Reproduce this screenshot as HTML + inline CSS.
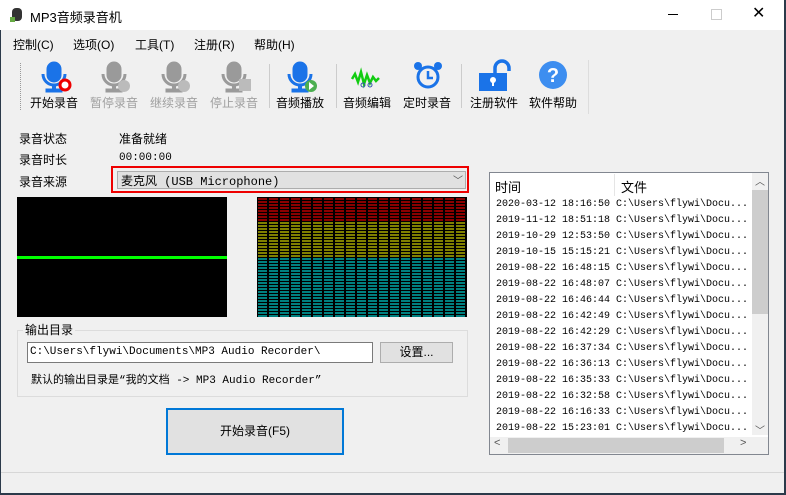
<!DOCTYPE html><html><head><meta charset="utf-8"><style>
body{margin:0;width:786px;height:495px;background:#f0f0f0;font-family:"Liberation Sans","Noto Sans CJK SC",sans-serif;font-size:12px;color:#000;position:relative;overflow:hidden}
.a{position:absolute;white-space:nowrap}
.mono{font-family:"Liberation Mono","Noto Sans CJK SC",monospace;font-size:11px}
.tb{position:absolute;top:60px;width:60px;text-align:center}
.tb span{position:absolute;top:34px;left:0;width:60px;font-size:12px}
.dis{color:#a0a0a0}
.row{position:absolute;left:496px;font-family:"Liberation Mono",monospace;font-size:10px;height:16px;line-height:16px;width:256px;overflow:hidden}
</style></head><body>
<div class="a" style="left:0;top:0;width:786px;height:30px;background:#fff"></div>
<svg class="a" style="left:10px;top:7px" width="14" height="16"><rect x="2" y="1" width="10" height="13" rx="4" fill="#333"/><rect x="0" y="10" width="5" height="5" fill="#6a4"/></svg>
<div class="a" style="left:30px;top:7px;font-size:13px">MP3音频录音机</div>
<div class="a" style="left:668px;top:14px;width:10px;border-top:1px solid #000"></div>
<div class="a" style="left:711px;top:9px;width:9px;height:9px;border:1px solid #ccc"></div>
<div class="a" style="left:752px;top:3px;font-size:16px">✕</div>
<div class="a" style="left:13px;top:36px">控制(C)</div>
<div class="a" style="left:73px;top:36px">选项(O)</div>
<div class="a" style="left:135px;top:36px">工具(T)</div>
<div class="a" style="left:194px;top:36px">注册(R)</div>
<div class="a" style="left:254px;top:36px">帮助(H)</div>
<div class="a" style="left:20px;top:63px;height:47px;border-left:1px dotted #999"></div>
<div class="a" style="left:269px;top:64px;height:44px;border-left:1px solid #ccc"></div>
<div class="a" style="left:336px;top:64px;height:44px;border-left:1px solid #ccc"></div>
<div class="a" style="left:461px;top:64px;height:44px;border-left:1px solid #ccc"></div>
<div class="a" style="left:588px;top:60px;height:54px;border-left:1px solid #ddd"></div>

<svg class="a" style="left:0;top:58px" width="600" height="38">
<defs><g id="mic"><rect x="-7" y="2" width="14" height="20" rx="7"/><path d="M-11 14 a11 11 0 0 0 22 0" fill="none" stroke-width="3"/><rect x="-1.5" y="25" width="3" height="5"/><rect x="-8" y="29" width="16" height="3"/></g></defs>
<g transform="translate(54,2)" fill="#1a73e8" stroke="#1a73e8"><use href="#mic"/></g><circle cx="65" cy="27" r="5" fill="#fff" stroke="#e00" stroke-width="3"/>
<g transform="translate(114,2)" fill="#9a9a9a" stroke="#9a9a9a"><use href="#mic"/></g><circle cx="124" cy="28" r="6" fill="#bbb"/>
<g transform="translate(174,2)" fill="#9a9a9a" stroke="#9a9a9a"><use href="#mic"/></g><circle cx="184" cy="28" r="6" fill="#bbb"/>
<g transform="translate(234,2)" fill="#9a9a9a" stroke="#9a9a9a"><use href="#mic"/></g><rect x="239" y="21" width="12" height="12" fill="#bbb"/>
<g transform="translate(300,2)" fill="#1a73e8" stroke="#1a73e8"><use href="#mic"/></g><circle cx="311" cy="28" r="6" fill="#4caf50"/><path d="M309 24 l5 4 -5 4z" fill="#fff"/>
<path d="M352 21 l3 -5 3 8 3 -10 3 12 3 -9 3 8 3 -6 3 4 3 -3" stroke="#1c1" stroke-width="2.5" fill="none"/><circle cx="363" cy="27" r="2" fill="none" stroke="#35a"/><circle cx="370" cy="27" r="2" fill="none" stroke="#35a"/>
<circle cx="428" cy="19" r="10" fill="none" stroke="#1a73e8" stroke-width="3"/><path d="M428 13 v7 h5" stroke="#1a73e8" stroke-width="2.5" fill="none"/><circle cx="418" cy="8" r="4" fill="#1a73e8"/><circle cx="438" cy="8" r="4" fill="#1a73e8"/>
<rect x="479" y="15" width="28" height="18" fill="#1a73e8"/><path d="M495 15 v-5 a7 7 0 0 1 14 0 v3" stroke="#1a73e8" stroke-width="3.5" fill="none"/><circle cx="493" cy="22" r="3" fill="#fff"/><rect x="492" y="22" width="2" height="6" fill="#fff"/>
<circle cx="553" cy="17" r="14" fill="#3d8ef0"/><text x="553" y="24" font-size="20" font-weight="bold" fill="#fff" text-anchor="middle" font-family="Liberation Sans">?</text>
</svg>
<div class="tb" style="left:24px"><span>开始录音</span></div>
<div class="tb dis" style="left:84px"><span>暂停录音</span></div>
<div class="tb dis" style="left:144px"><span>继续录音</span></div>
<div class="tb dis" style="left:204px"><span>停止录音</span></div>
<div class="tb" style="left:270px"><span>音频播放</span></div>
<div class="tb" style="left:337px"><span>音频编辑</span></div>
<div class="tb" style="left:397px"><span>定时录音</span></div>
<div class="tb" style="left:464px"><span>注册软件</span></div>
<div class="tb" style="left:523px"><span>软件帮助</span></div>

<div class="a" style="left:19px;top:130px">录音状态</div>
<div class="a" style="left:119px;top:130px">准备就绪</div>
<div class="a" style="left:19px;top:151px">录音时长</div>
<div class="a mono" style="left:119px;top:152px">00:00:00</div>
<div class="a" style="left:19px;top:173px">录音来源</div>
<div class="a" style="left:111px;top:166px;width:358px;height:27px;border:2px solid #e00;box-sizing:border-box"></div>
<div class="a" style="left:117px;top:171px;width:349px;height:18px;border:1px solid #adadad;background:#e1e1e1;box-sizing:border-box"></div>
<div class="a mono" style="left:121px;top:172px;font-size:12px">麦克风 (USB Microphone)</div>
<div class="a" style="left:453px;top:172px;font-size:10px;color:#555">﹀</div>

<div class="a" style="left:17px;top:197px;width:210px;height:120px;background:#000"></div>
<div class="a" style="left:17px;top:256px;width:210px;height:3px;background:#0f0"></div>
<div class="a" style="left:257px;top:197px;width:210px;height:120px;background:#000"></div>
<div class="a" style="left:258px;top:198px;width:208px;height:24px;background:repeating-linear-gradient(90deg,transparent 0 9px,#000 9px 11px),repeating-linear-gradient(180deg,#8b0000 0 2px,#000 2px 3px)"></div>
<div class="a" style="left:258px;top:222px;width:208px;height:36px;background:repeating-linear-gradient(90deg,transparent 0 9px,#000 9px 11px),repeating-linear-gradient(180deg,#808000 0 2px,#000 2px 3px)"></div>
<div class="a" style="left:258px;top:258px;width:208px;height:59px;background:repeating-linear-gradient(90deg,transparent 0 9px,#000 9px 11px),repeating-linear-gradient(180deg,#008080 0 2px,#000 2px 3px)"></div>

<div class="a" style="left:17px;top:330px;width:449px;height:65px;border:1px solid #dcdcdc"></div>
<div class="a" style="left:23px;top:321px;background:#f0f0f0;padding:0 2px">输出目录</div>
<div class="a" style="left:27px;top:342px;width:346px;height:21px;border:1px solid #7a7a7a;background:#fff;box-sizing:border-box"></div>
<div class="a mono" style="left:30px;top:346px">C:\Users\flywi\Documents\MP3 Audio Recorder\</div>
<div class="a" style="left:380px;top:342px;width:73px;height:21px;border:1px solid #adadad;background:#e1e1e1;box-sizing:border-box;text-align:center;line-height:19px" >设置...</div>
<div class="a mono" style="left:31px;top:371px;font-size:11px">默认的输出目录是“我的文档 -> MP3 Audio Recorder”</div>

<div class="a" style="left:166px;top:408px;width:178px;height:47px;border:2px solid #0078d7;background:#e1e1e1;box-sizing:border-box;text-align:center;line-height:43px">开始录音(F5)</div>

<div class="a" style="left:489px;top:172px;width:280px;height:283px;border:1px solid #828790;background:#fff;box-sizing:border-box"></div>
<div class="a" style="left:495px;top:177px;font-size:13px">时间</div>
<div class="a" style="left:614px;top:174px;height:22px;border-left:1px solid #e5e5e5"></div>
<div class="a" style="left:621px;top:177px;font-size:13px">文件</div>
<div class="row" style="top:197px">2020-03-12 18:16:50 C:\Users\flywi\Docu...</div>
<div class="row" style="top:213px">2019-11-12 18:51:18 C:\Users\flywi\Docu...</div>
<div class="row" style="top:229px">2019-10-29 12:53:50 C:\Users\flywi\Docu...</div>
<div class="row" style="top:245px">2019-10-15 15:15:21 C:\Users\flywi\Docu...</div>
<div class="row" style="top:261px">2019-08-22 16:48:15 C:\Users\flywi\Docu...</div>
<div class="row" style="top:277px">2019-08-22 16:48:07 C:\Users\flywi\Docu...</div>
<div class="row" style="top:293px">2019-08-22 16:46:44 C:\Users\flywi\Docu...</div>
<div class="row" style="top:309px">2019-08-22 16:42:49 C:\Users\flywi\Docu...</div>
<div class="row" style="top:325px">2019-08-22 16:42:29 C:\Users\flywi\Docu...</div>
<div class="row" style="top:341px">2019-08-22 16:37:34 C:\Users\flywi\Docu...</div>
<div class="row" style="top:357px">2019-08-22 16:36:13 C:\Users\flywi\Docu...</div>
<div class="row" style="top:373px">2019-08-22 16:35:33 C:\Users\flywi\Docu...</div>
<div class="row" style="top:389px">2019-08-22 16:32:58 C:\Users\flywi\Docu...</div>
<div class="row" style="top:405px">2019-08-22 16:16:33 C:\Users\flywi\Docu...</div>
<div class="row" style="top:421px">2019-08-22 15:23:01 C:\Users\flywi\Docu...</div>
<div class="a" style="left:752px;top:173px;width:16px;height:262px;background:#f0f0f0"></div>
<div class="a" style="left:752px;top:190px;width:16px;height:124px;background:#cdcdcd"></div>
<div class="a" style="left:755px;top:173px;font-size:10px;color:#555">︿</div>
<div class="a" style="left:755px;top:422px;font-size:10px;color:#555">﹀</div>
<div class="a" style="left:490px;top:437px;width:278px;height:17px;background:#f0f0f0"></div>
<div class="a" style="left:508px;top:438px;width:216px;height:15px;background:#cdcdcd"></div>
<div class="a" style="left:494px;top:437px;font-size:11px;color:#555">&lt;</div>
<div class="a" style="left:740px;top:437px;font-size:11px;color:#555">&gt;</div>

<div class="a" style="left:0;top:472px;width:786px;border-top:1px solid #d7d7d7"></div>
<div class="a" style="left:0;top:493px;width:786px;height:2px;background:#2b3a4a"></div>
<div class="a" style="left:784px;top:0;width:2px;height:495px;background:#2b3a4a"></div>
<div class="a" style="left:0;top:30px;width:1px;height:465px;background:#2b3a4a"></div>
</body></html>
